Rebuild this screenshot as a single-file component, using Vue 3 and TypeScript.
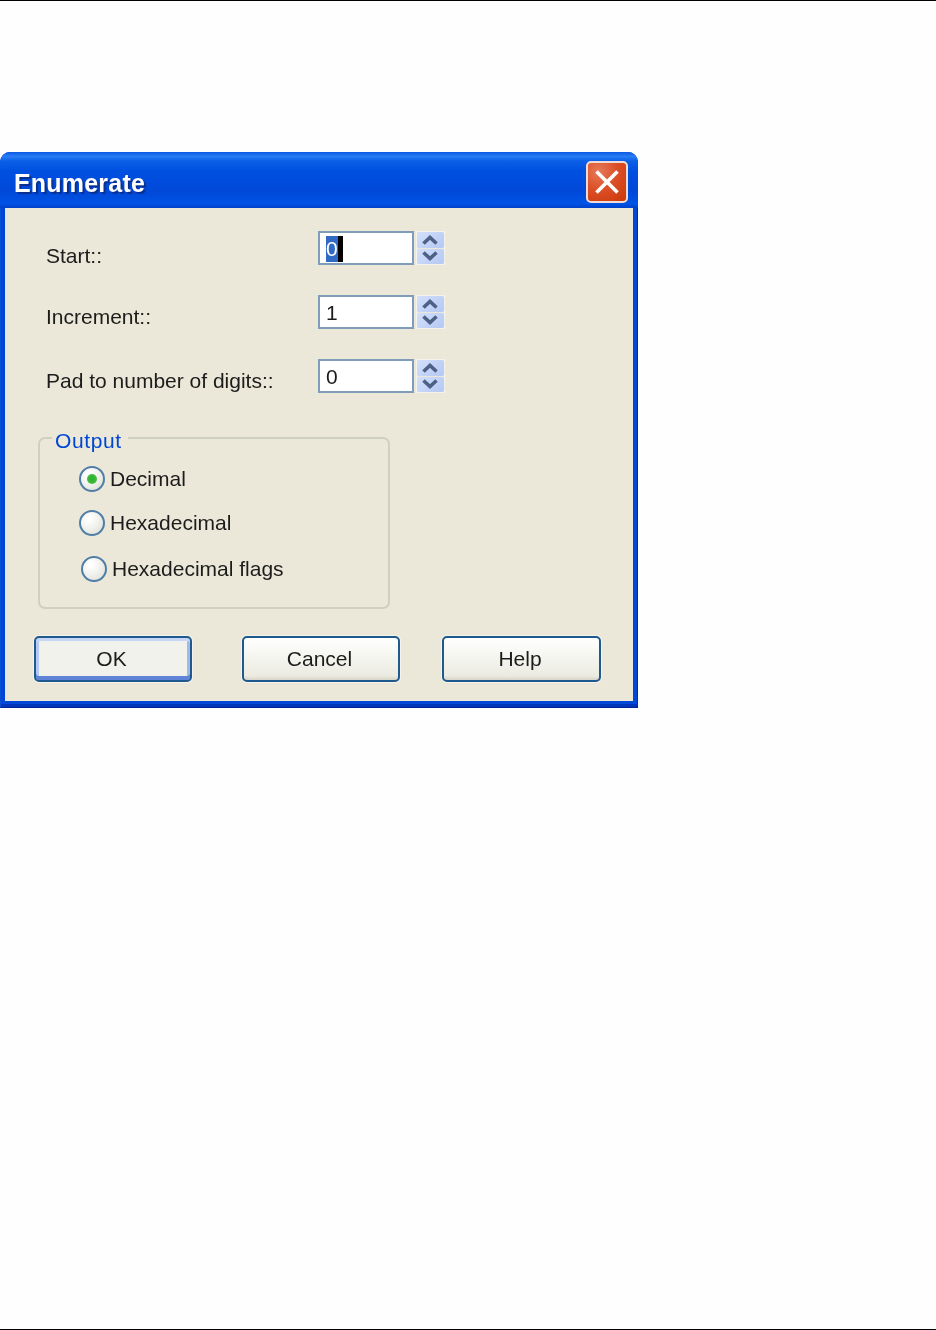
<script setup lang="ts">
interface SpinRow {
  label: string;
  value: string;
  selected?: boolean;
}

interface RadioRow {
  label: string;
  checked?: boolean;
}

const spinRows: SpinRow[] = [
  { label: 'Start::', value: '0', selected: true },
  { label: 'Increment::', value: '1' },
  { label: 'Pad to number of digits::', value: '0' },
];

const radios: RadioRow[] = [
  { label: 'Decimal', checked: true },
  { label: 'Hexadecimal' },
  { label: 'Hexadecimal flags' },
];

const buttons = ['OK', 'Cancel', 'Help'];
</script>

<template>
  <div class="page">
    <section class="dialog">
      <header class="titlebar">
        <span class="title">Enumerate</span>
        <span class="close">
          <svg width="26" height="26" viewBox="0 0 26 26">
            <path d="M2.5 2.5 L23.5 23.5 M23.5 2.5 L2.5 23.5" stroke="#fff" stroke-width="3.6" fill="none" />
          </svg>
        </span>
      </header>

      <div class="client">
        <div v-for="row in spinRows" :key="row.label" class="spin-row">
          <span class="spin-label">{{ row.label }}</span>
          <div class="spin-input">
            <span v-if="row.selected" class="sel">{{ row.value }}</span>
            <span v-else>{{ row.value }}</span>
            <span v-if="row.selected" class="caret"></span>
          </div>
          <div class="spin-btns">
            <span class="spin-btn">
              <svg width="16" height="10" viewBox="0 0 16 10">
                <path d="M1.5 8.5 L8 2.5 L14.5 8.5" stroke="#4d6185" stroke-width="3.6" fill="none" />
              </svg>
            </span>
            <span class="spin-btn">
              <svg width="16" height="10" viewBox="0 0 16 10">
                <path d="M1.5 1.5 L8 7.5 L14.5 1.5" stroke="#4d6185" stroke-width="3.6" fill="none" />
              </svg>
            </span>
          </div>
        </div>

        <fieldset class="group">
          <legend>Output</legend>
          <label v-for="radio in radios" :key="radio.label" class="radio-row">
            <span class="radio">
              <span v-if="radio.checked" class="dot"></span>
            </span>
            <span>{{ radio.label }}</span>
          </label>
        </fieldset>

        <div class="actions">
          <button
            v-for="(b, i) in buttons"
            :key="b"
            class="btn"
            :class="{ primary: i === 0 }"
            type="button"
          >
            {{ b }}
          </button>
        </div>
      </div>
    </section>
  </div>
</template>

<style>
body {
  background: #fff;
}
</style>

<style scoped>
.page {
  height: 1330px;
  box-sizing: border-box;
  border-top: 1px solid #000;
  border-bottom: 1px solid #000;
  padding-top: 151px;
  font-family: "Liberation Sans", Arial, sans-serif;
  font-size: 21px;
  color: #1c1c1c;
  background: #fefefe;
}

.dialog {
  width: 638px;
  height: 556px;
  box-sizing: border-box;
  display: flex;
  flex-direction: column;
  border-radius: 10px 10px 0 0;
  background: #0047d8;
  padding: 0 4px 6px 4px;
  border-left: 1px solid #0a4fd6;
  border-right: 1px solid #00309c;
  border-bottom: 1px solid #00229a;
  box-shadow: inset 0 -3px 0 #0035b8;
  filter: blur(0.45px);
}

.titlebar {
  height: 56px;
  box-sizing: border-box;
  flex: none;
  margin: 0 -5px;
  padding: 4px 10px 0 14px;
  display: flex;
  align-items: center;
  justify-content: space-between;
  border-radius: 10px 10px 0 0;
  background: linear-gradient(180deg, #0a5ae6 0%, #2a7cf4 8%, #0a5fe8 16%, #0050e0 34%, #0048d8 70%, #0053e6 92%, #0040c8 100%);
}

.title {
  color: #fff;
  font-weight: 700;
  font-size: 25px;
  letter-spacing: 0.2px;
  padding-top: 2px;
  text-shadow: 2px 2px 1px #0a2f8c;
}

.close {
  width: 38px;
  height: 38px;
  display: flex;
  align-items: center;
  justify-content: center;
  border: 2px solid #f0dcd2;
  border-radius: 5px;
  background: radial-gradient(circle at 28% 22%, #e67a58 0%, #dc5028 45%, #cc3608 100%);
}

.client {
  flex: 1;
  background: #ebe8d9;
  padding: 23px 0 0 33px;
  display: flex;
  flex-direction: column;
}

.spin-row {
  display: flex;
  align-items: center;
  height: 34px;
  margin-bottom: 30px;
}

.spin-label {
  width: 272px;
  margin-left: 8px;
  padding-top: 16px;
  white-space: nowrap;
}

.spin-row:nth-child(n + 2) .spin-label {
  padding-top: 9px;
}

.spin-input {
  width: 96px;
  height: 34px;
  box-sizing: border-box;
  border: 2px solid #7f9db9;
  background: #fff;
  padding: 1px 0 0 6px;
  display: flex;
  align-items: center;
}

.sel {
  background: #316ac5;
  color: #fff;
  line-height: 26px;
}

.caret {
  width: 5px;
  height: 26px;
  background: #000;
}

.spin-btns {
  margin-left: 2px;
  width: 29px;
  height: 34px;
  box-sizing: border-box;
  border: 1px solid #f4f3ec;
  display: flex;
  flex-direction: column;
  gap: 1px;
}

.spin-btn {
  flex: 1;
  display: flex;
  align-items: center;
  justify-content: center;
  padding-right: 2px;
  background: linear-gradient(135deg, #d3e0fb, #b4c8f4);
  border-radius: 2px;
}

.group {
  width: 352px;
  height: 185px;
  box-sizing: border-box;
  margin: 1px 0 0 0;
  padding: 13px 0 0 39px;
  border: 2px solid #d0d0bf;
  border-radius: 7px;
}

.group legend {
  margin-left: -27px;
  padding: 5px 6px 0 3px;
  color: #0046d5;
  letter-spacing: 0.6px;
  line-height: 23px;
}

.radio-row {
  display: flex;
  align-items: center;
  gap: 5px;
  height: 28px;
  margin-bottom: 16px;
}

.radio-row:last-child {
  margin-left: 2px;
  margin-top: 18px;
}

.radio {
  width: 26px;
  height: 26px;
  box-sizing: border-box;
  flex: none;
  border: 2px solid #4f7ea6;
  border-radius: 50%;
  background: radial-gradient(circle at 35% 30%, #fff 10%, #e6e6e0 75%, #d6d6ce 100%);
  display: flex;
  align-items: center;
  justify-content: center;
}

.dot {
  width: 10px;
  height: 10px;
  border-radius: 50%;
  background: radial-gradient(circle, #2fb52f 30%, #5cc75c 100%);
}

.actions {
  display: flex;
  margin: 27px 0 0 -4px;
  gap: 50px;
}

.btn {
  width: 158px;
  height: 46px;
  box-sizing: border-box;
  border: 2px solid #1f5a8f;
  border-radius: 5px;
  background: linear-gradient(180deg, #fff 0%, #f4f4ee 50%, #ecebe2 90%, #d8d5c6 100%);
  box-shadow: 0 0 0 1px #f5f4ec;
  font: inherit;
  color: #1c1c1c;
  padding: 0 3px 0 0;
}

.btn:last-child {
  margin-left: -8px;
  width: 159px;
}

.btn.primary {
  box-shadow: 0 0 0 1px #f5f4ec, inset 0 3px 0 #c6d6f6, inset 0 -4px 0 #5f84d8, inset 3px 0 0 #b4caf3, inset -3px 0 0 #a0baec;
  background: #f2f2ec;
}
</style>
